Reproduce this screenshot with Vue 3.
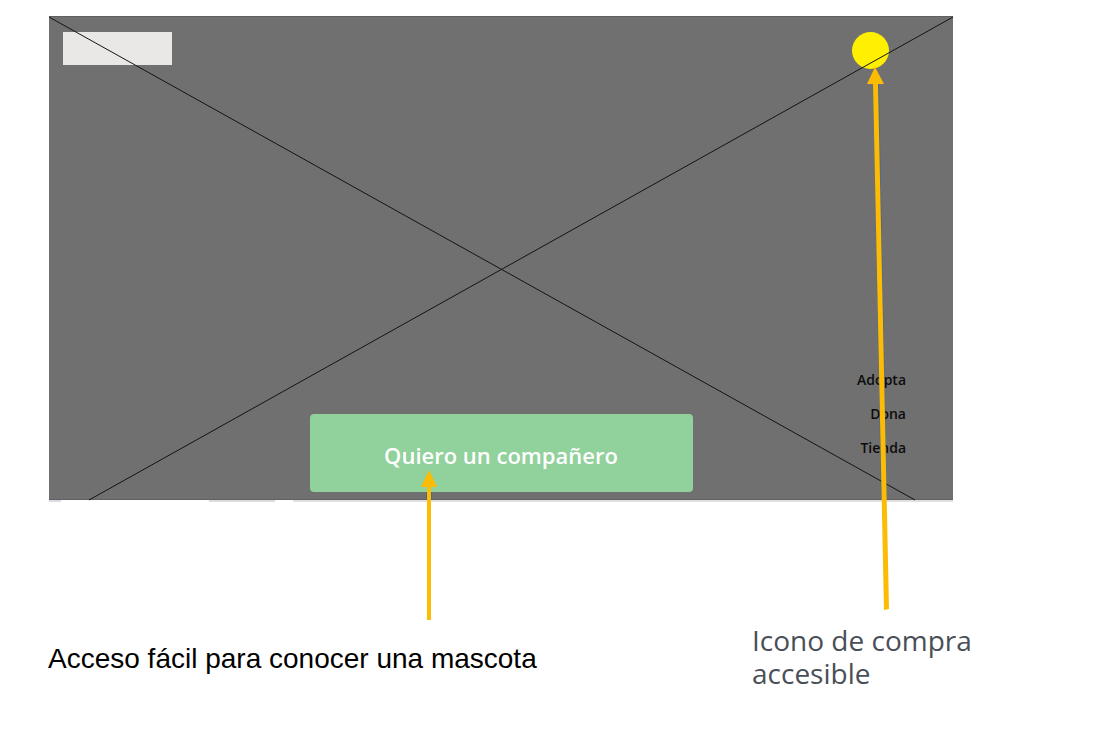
<script setup>
const links = ['Adopta', 'Dona', 'Tienda']
</script>

<template>
  <main class="page">
    <section class="board">
      <header class="top">
        <div class="logo"></div>
        <button class="cart" type="button" aria-label="Compra"></button>
      </header>
      <div class="bottom">
        <button class="cta" type="button">Quiero un compañero</button>
        <nav class="menu">
          <a v-for="link in links" :key="link" href="#">{{ link }}</a>
        </nav>
      </div>
      <svg class="overlay" viewBox="0 0 904 604" aria-hidden="true">
        <g stroke="#141414" stroke-width="1">
          <line x1="0" y1="1" x2="866" y2="484" />
          <line x1="904" y1="1" x2="40" y2="484" />
        </g>
        <g stroke="#2f5f98" stroke-opacity="0.5" stroke-width="6">
          <line x1="827" y1="68" x2="835" y2="484" />
          <line x1="380" y1="476" x2="380" y2="484" />
        </g>
        <g fill="#fcbb04">
          <path d="M826 51 L835 68 L829 68 L840 593 L835 594 L824 68 L818 68 Z" />
          <path d="M380 454 L388 471 L382 471 L382 604 L378 604 L378 471 L372 471 Z" />
        </g>
      </svg>
    </section>
    <div class="edge"></div>
    <div class="captions">
      <p class="left">Acceso fácil para conocer una mascota</p>
      <p class="right">Icono de compra accesible</p>
    </div>
  </main>
</template>

<style>
body {
  background: #fff;
}
</style>

<style scoped>
.page {
  padding: 16px 150px 48px 49px;
}
.board {
  position: relative;
  display: flex;
  flex-direction: column;
  justify-content: space-between;
  box-sizing: border-box;
  aspect-ratio: 904 / 484;
  padding: 16px 0 8px;
  background: #707070;
  box-shadow: inset 0 1px #606060, inset 0 -1px #606060;
}
.top {
  display: flex;
  justify-content: space-between;
  padding: 0 64px 0 14px;
}
.logo {
  width: 109px;
  height: 33px;
  background: #e9e8e6;
}
.cart {
  width: 37px;
  height: 37px;
  padding: 0;
  border: 0;
  border-radius: 50%;
  background: #ffef00;
}
.bottom {
  display: grid;
  grid-template-columns: 1fr 383px 1fr;
  align-items: end;
}
.cta {
  grid-column: 2;
  height: 78px;
  padding: 4px 0 0;
  border: 0;
  border-radius: 4px;
  background: #91d19c;
  color: #fff;
  font: 600 22px/32px "Open Sans", "Noto Sans", sans-serif;
}
.menu {
  display: flex;
  flex-direction: column;
  align-items: flex-end;
  padding: 0 47px 27px 0;
}
.menu a {
  color: #0c0c0c;
  font: 600 14px/34px "Open Sans", "Noto Sans", sans-serif;
  text-decoration: none;
}
.overlay {
  position: absolute;
  top: 0;
  left: 0;
  width: 100%;
  overflow: visible;
  pointer-events: none;
}
.edge {
  height: 2px;
  background: linear-gradient(90deg, #dcdce6 12px, #fff 12px, #fff 160px, #dcdcdc 160px, #dcdcdc 226px, #fff 226px, #fff 244px, #dfdfe4 244px);
}
.captions {
  display: flex;
  justify-content: space-between;
  align-items: center;
  margin: 122px -50px 0 -1px;
}
.captions p {
  margin: 0;
}
.left {
  padding-top: 4px;
  color: #000;
  font: 28px/34px "Liberation Sans", Arial, sans-serif;
}
.right {
  width: 251px;
  color: #4a4f57;
  font: 28px/33px "Open Sans", "Noto Sans", sans-serif;
}
</style>
